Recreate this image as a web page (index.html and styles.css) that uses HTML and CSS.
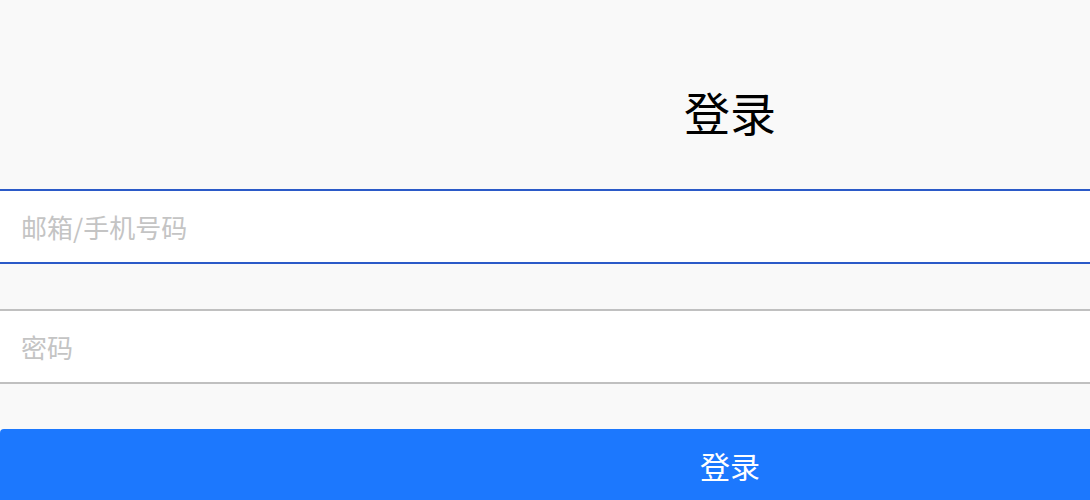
FILE: index.html
```html
<!DOCTYPE html>
<html lang="zh">
<head>
<meta charset="utf-8">
<title>登录</title>
<link rel="stylesheet" href="styles.css">
</head>
<body>
<div class="page">
  <header class="header">
    <h1 class="title">登录</h1>
  </header>
  <form class="form">
    <div class="field field-active">
      <input class="input" type="text" placeholder="邮箱/手机号码">
    </div>
    <div class="field">
      <input class="input" type="password" placeholder="密码">
    </div>
    <button class="submit" type="button">登录</button>
  </form>
</div>
</body>
</html>
```
FILE: styles.css
```css
html, body {
  margin: 0;
  padding: 0;
  overflow: hidden;
  background: #f9f9f9;
}
.page {
  width: 100%;
  font-family: "Noto Sans CJK SC", "Noto Sans", sans-serif;
}
.header {
  height: 189px;
  box-sizing: border-box;
  padding-top: 88px;
  padding-left: 370px;
}
.title {
  margin: 0;
  text-align: center;
  font-size: 46px;
  line-height: 46px;
  font-weight: 400;
  color: #000;
}
.form {
  display: flex;
  flex-direction: column;
  gap: 45px;
  margin: 0;
}
.field {
  height: 75px;
  box-sizing: border-box;
  border-top: 2px solid #c0c0c0;
  border-bottom: 2px solid #c0c0c0;
  background: #fff;
  display: flex;
}
.field-active {
  border-color: #2b5ac8;
}
.input {
  flex: 1;
  min-width: 0;
  border: 0;
  outline: none;
  background: transparent;
  padding: 0 21px;
  font-family: inherit;
  font-size: 26px;
  color: #333;
}
.input::placeholder {
  color: #c4c4c4;
}
.submit {
  height: 76px;
  box-sizing: border-box;
  border: 0;
  border-radius: 4px 0 0 0;
  background: #1c78fe;
  color: #fff;
  font-family: inherit;
  font-size: 30px;
  padding: 0 0 4px 370px;
  margin: 0;
}
```
